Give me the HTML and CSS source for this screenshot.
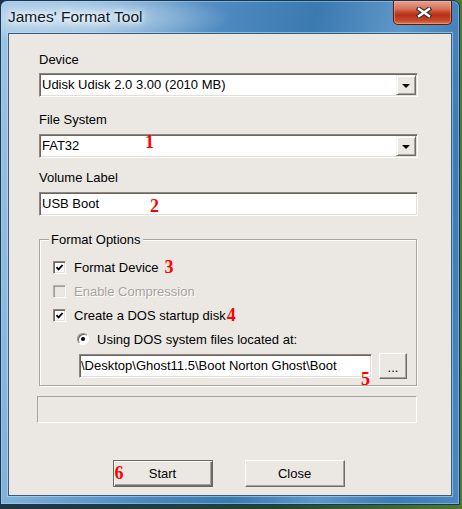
FILE: index.html
```html
<!DOCTYPE html>
<html>
<head>
<meta charset="utf-8">
<title>James' Format Tool</title>
<link rel="stylesheet" href="styles.css">
</head>
<body>
<div class="window">
  <div class="titlebar">
    <span class="title">James' Format Tool</span>
    <div class="close">
      <svg width="16" height="11" viewBox="0 0 16 11">
        <path d="M3 2 L13 9 M13 2 L3 9" stroke="#3a3230" stroke-width="4.6" stroke-linecap="square" fill="none"/>
        <path d="M3 2 L13 9 M13 2 L3 9" stroke="#ffffff" stroke-width="2.4" stroke-linecap="square" fill="none"/>
      </svg>
    </div>
  </div>
  <div class="client">
    <div class="label">Device</div>
    <div class="field combo gap6">
      <span class="value">Udisk Udisk 2.0 3.00 (2010 MB)</span>
      <span class="drop"><i class="arrow"></i></span>
    </div>

    <div class="label gap15">File System</div>
    <div class="field combo gap7">
      <span class="value">FAT32</span>
      <span class="drop"><i class="arrow"></i></span>
      <b class="note n1">1</b>
    </div>

    <div class="label gap12">Volume Label</div>
    <div class="field gap7">
      <span class="value">USB Boot</span>
      <b class="note n2">2</b>
    </div>

    <div class="group">
      <div class="legend">Format Options</div>
      <div class="row">
        <span class="check"><svg width="9" height="9" viewBox="0 0 9 9"><path d="M1.5 4.2 L3.6 6.4 L7.6 2" stroke="#000" stroke-width="1.8" fill="none"/></svg></span>
        <span class="text">Format Device</span>
        <b class="note inline n3">3</b>
      </div>
      <div class="row">
        <span class="check disabled"></span>
        <span class="text disabled-text">Enable Compression</span>
      </div>
      <div class="row">
        <span class="check"><svg width="9" height="9" viewBox="0 0 9 9"><path d="M1.5 4.2 L3.6 6.4 L7.6 2" stroke="#000" stroke-width="1.8" fill="none"/></svg></span>
        <span class="text">Create a DOS startup disk</span>
        <b class="note inline n4">4</b>
      </div>
      <div class="row radio-row">
        <span class="radio"><i class="dot"></i></span>
        <span class="text">Using DOS system files located at:</span>
      </div>
      <div class="path-row">
        <div class="field path">
          <span class="value">\Desktop\Ghost11.5\Boot Norton Ghost\Boot</span>
          <b class="note n5">5</b>
        </div>
        <div class="btn browse">...</div>
      </div>
    </div>

    <div class="progress"></div>

    <div class="buttons">
      <div class="btn default">Start<b class="note n6">6</b></div>
      <div class="btn">Close</div>
    </div>
  </div>
</div>
</body>
</html>
```
FILE: styles.css
```css
html, body {
  margin: 0;
  padding: 0;
}
body {
  width: 462px;
  height: 509px;
  overflow: hidden;
  background: linear-gradient(90deg, #1c3546 0%, #23452f 60%, #4f7a32 100%);
  font-family: "Liberation Sans", Arial, sans-serif;
}

.window {
  width: 460px;
  height: 505px;
  box-sizing: border-box;
  border: 1px solid #1b3650;
  border-radius: 7px 7px 0 0;
  padding: 0 7px 8px 7px;
  display: flex;
  flex-direction: column;
  background:
    radial-gradient(ellipse 150px 26px at 80px 17px, rgba(255,255,255,0.6), rgba(255,255,255,0) 100%),
    linear-gradient(100deg, #9dc4e3 0%, #7fb0d8 18%, #4d89c0 42%, #3b79b1 58%, #5f97c8 74%, #3c7bb5 88%, #4c88c0 100%);
  box-shadow: inset 0 0 0 1px rgba(180,220,250,0.45);
}

.titlebar {
  height: 32px;
  flex-shrink: 0;
  display: flex;
  align-items: flex-start;
}
.title {
  margin-top: 7px;
  font-size: 15.5px;
  line-height: 18px;
  color: #0d1b2c;
  text-shadow: 0 0 5px #fff, 0 0 9px rgba(255,255,255,0.9), 0 0 14px rgba(255,255,255,0.7);
}
.close {
  margin-left: auto;
  width: 59px;
  height: 24px;
  box-sizing: border-box;
  border: 1px solid #5e1a0e;
  border-top: none;
  border-radius: 0 0 5px 5px;
  background: linear-gradient(180deg, #e8a28e 0%, #d7705a 35%, #c4432b 50%, #b5301a 62%, #c8492a 85%, #e07848 100%);
  box-shadow: inset 0 0 0 1px rgba(255,190,170,0.45);
  display: flex;
  align-items: center;
  justify-content: center;
  padding-left: 3px;
}

.client {
  flex: 1;
  background: #ebe8e4;
  border: 1px solid #3a5a77;
  box-shadow: 0 0 0 1px rgba(190,230,255,0.55);
  padding: 18px 33px 0 30px;
  display: flex;
  flex-direction: column;
  font-size: 13px;
  line-height: 15px;
  color: #000;
}

.label {
  height: 15px;
}
.gap6 { margin-top: 6px; }
.gap7 { margin-top: 7px; }
.gap12 { margin-top: 12px; }
.gap15 { margin-top: 15px; }

.field {
  position: relative;
  height: 24px;
  box-sizing: border-box;
  border: 1px solid;
  border-color: #8b8680 #ffffff #ffffff #8b8680;
  box-shadow: inset 1px 1px 0 #6b6661, inset -1px -1px 0 #e2dfda;
  background: #fff;
  padding: 1px;
  display: flex;
  align-items: center;
}
.value {
  flex: 1;
  padding-left: 1px;
  padding-bottom: 1px;
  white-space: nowrap;
  overflow: hidden;
}
.drop {
  width: 20px;
  height: 20px;
  box-sizing: border-box;
  background: #ebe8e4;
  border: 1px solid;
  border-color: #f4f2ef #6f6b66 #6f6b66 #f4f2ef;
  box-shadow: inset 1px 1px 0 #ffffff, inset -1px -1px 0 #a7a39d;
  display: flex;
  align-items: center;
  justify-content: center;
}
.arrow {
  width: 0;
  height: 0;
  border-left: 4px solid transparent;
  border-right: 4px solid transparent;
  border-top: 4px solid #000;
  margin-top: 1px;
}

.note {
  font-family: "Liberation Serif", "Times New Roman", serif;
  font-weight: bold;
  font-size: 18px;
  line-height: 18px;
  color: #ff0000;
  position: absolute;
}
.note.inline {
  position: static;
}
.n1 { left: 105px; top: -2px; }
.n2 { left: 110px; top: 4px; }
.n3 { margin-left: 6px; }
.n4 { margin-left: 1px; }
.n5 { left: 281px; top: 15px; }
.n6 { left: 1px; top: 3px; }

.group {
  margin-top: 23px;
  margin-right: 1px;
  border: 1px solid #a8a49e;
  box-shadow: inset 1px 1px 0 #ffffff, 1px 1px 0 #ffffff;
  padding: 0 0 6px 13px;
  display: flex;
  flex-direction: column;
}
.legend {
  align-self: flex-start;
  margin: -8px 0 8px -4px;
  padding: 0 2px;
  height: 15px;
  background: #ebe8e4;
}
.row {
  height: 24px;
  display: flex;
  align-items: center;
}
.check {
  width: 13px;
  height: 13px;
  box-sizing: border-box;
  border: 1px solid;
  border-color: #8b8680 #ffffff #ffffff #8b8680;
  box-shadow: inset 1px 1px 0 #6b6661, inset -1px -1px 0 #e2dfda;
  background: #fff;
  display: flex;
  align-items: center;
  justify-content: center;
  margin-right: 8px;
}
.check.disabled {
  background: #ebe8e4;
  border-color: #b4b0aa #ffffff #ffffff #b4b0aa;
  box-shadow: inset 1px 1px 0 #a29e98, inset -1px -1px 0 #e6e3df;
}
.disabled-text {
  color: #a6a29d;
  text-shadow: 1px 1px 0 #ffffff;
}
.radio-row {
  padding-left: 24px;
}
.radio {
  width: 12px;
  height: 12px;
  box-sizing: border-box;
  border-radius: 50%;
  border: 1px solid;
  border-color: #8b8680 #ffffff #ffffff #8b8680;
  box-shadow: inset 1px 1px 0 #6b6661;
  background: #fff;
  display: flex;
  align-items: center;
  justify-content: center;
  margin-right: 8px;
}
.dot {
  width: 4px;
  height: 4px;
  border-radius: 50%;
  background: #000;
}
.path-row {
  margin-top: 2px;
  padding-left: 26px;
  display: flex;
  align-items: center;
  gap: 7px;
}
.field.path {
  width: 293px;
}
.field.path .value {
  padding-left: 0;
}

.btn {
  position: relative;
  box-sizing: border-box;
  background: #ebe8e4;
  border: 1px solid;
  border-color: #ffffff #6f6b66 #6f6b66 #ffffff;
  box-shadow: inset -1px -1px 0 #a7a39d;
  display: flex;
  align-items: center;
  justify-content: center;
}
.browse {
  width: 28px;
  height: 26px;
  padding-top: 2px;
}
.progress {
  margin-top: 10px;
  margin-left: -2px;
  width: 380px;
  height: 27px;
  box-sizing: border-box;
  border: 1px solid;
  border-color: #a8a49e #ffffff #ffffff #a8a49e;
}
.buttons {
  margin-top: 37px;
  display: flex;
  justify-content: center;
  gap: 32px;
}
.buttons .btn {
  width: 100px;
  height: 27px;
}
.btn.default {
  border: 1px solid #6a6661;
  box-shadow: inset 1px 1px 0 #ffffff, inset -1px -1px 0 #6f6b66, inset -2px -2px 0 #a7a39d;
}
```
